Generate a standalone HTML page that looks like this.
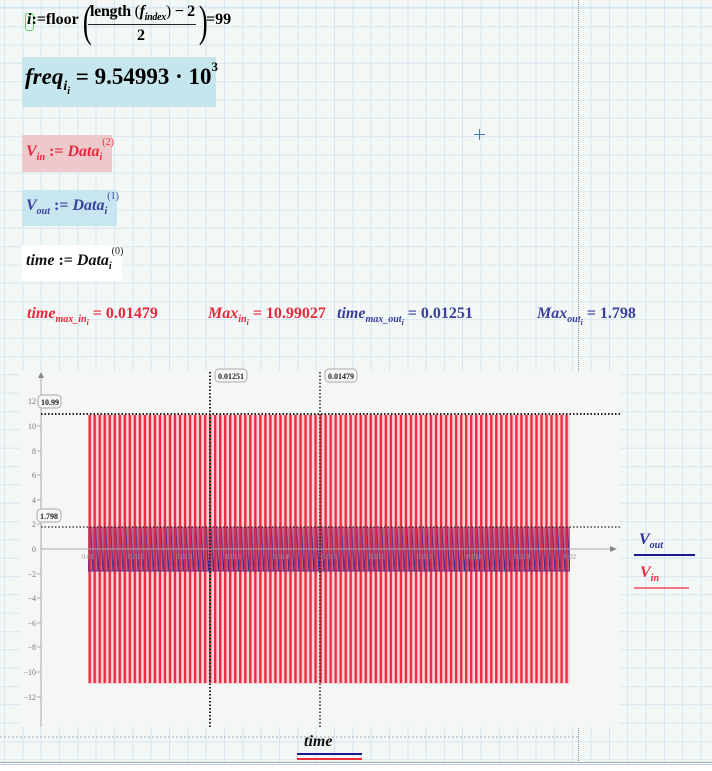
<!DOCTYPE html>
<html><head><meta charset="utf-8"><style>
html,body{margin:0;padding:0;}
body{width:712px;height:771px;position:relative;overflow:hidden;background-color:#f3f7f5;
background-image:repeating-linear-gradient(90deg,#d6e7f3 0 1px,transparent 1px 18.33px),repeating-linear-gradient(0deg,#d6e7f3 0 1px,transparent 1px 18.33px);
background-position:4px 7.7px;font-family:"Liberation Serif",serif;}
.a{position:absolute;white-space:nowrap;}
.m{font-weight:bold;font-size:16px;}
i{font-style:italic}
sub,sup{font-size:10px;line-height:0}
.red{color:#e8283c}.blue{color:#3b3f9e}
</style></head><body>
<div class="a" style="left:25px;top:13px;width:7px;height:16px;border:1.5px solid #5fd060;border-radius:3px;"></div>
<div class="a m" style="left:27px;top:11px;"><i>i</i>:=floor</div>
<div class="a" style="left:80px;top:-4px;font-size:44px;transform:scaleX(0.6);">(</div>
<div class="a m" style="left:90px;top:3px;letter-spacing:-0.3px">length <span style="font-weight:normal">(</span><i>f<sub>index</sub></i><span style="font-weight:normal">)</span> − 2</div>
<div class="a" style="left:88px;top:24px;width:108px;height:1px;background:#222"></div>
<div class="a m" style="left:137px;top:27px;">2</div>
<div class="a" style="left:196px;top:-4px;font-size:44px;transform:scaleX(0.6);">)</div>
<div class="a m" style="left:206px;top:11px;">=99</div>
<div class="a" style="left:22px;top:57px;width:194px;height:50px;background:#c6e6ee"></div>
<div class="a" style="left:25px;top:64px;font-size:23px;font-weight:bold;"><i>freq</i><sub style="font-size:14px;"><i>i</i><sub style="font-size:10px;"><i>i</i></sub></sub> = 9.54993 · 10<sup style="font-size:13px;position:relative;top:-4px;">3</sup></div>
<div class="a" style="left:22px;top:135px;width:90px;height:37px;background:#edc9cc"></div>
<div class="a m red" style="left:26px;top:143px;"><i>V<sub>in</sub></i> := <i>Data</i><sub><i>i</i></sub><sup style="position:relative;top:-5px;font-weight:normal">(2)</sup></div>
<div class="a" style="left:22px;top:190px;width:95px;height:36px;background:#c7e6ef"></div>
<div class="a m blue" style="left:26px;top:197px;"><i>V<sub>out</sub></i> := <i>Data</i><sub><i>i</i></sub><sup style="position:relative;top:-5px;font-weight:normal">(1)</sup></div>
<div class="a" style="left:22px;top:245px;width:100px;height:36px;background:#fff"></div>
<div class="a m" style="left:26px;top:252px;color:#111"><i>time</i> := <i>Data</i><sub><i>i</i></sub><sup style="position:relative;top:-5px;font-weight:normal">(0)</sup></div>
<div class="a m red" style="left:27px;top:305px;"><i>time<sub>max_in<sub style="font-size:8px">i</sub></sub></i> = 0.01479</div>
<div class="a m red" style="left:208px;top:305px;"><i>Max<sub>in<sub style="font-size:8px">i</sub></sub></i> = 10.99027</div>
<div class="a m blue" style="left:337px;top:305px;"><i>time<sub>max_out<sub style="font-size:8px">i</sub></sub></i> = 0.01251</div>
<div class="a m blue" style="left:537px;top:305px;"><i>Max<sub>out<sub style="font-size:8px">i</sub></sub></i> = 1.798</div>
<div class="a" style="left:474px;top:134px;width:11px;height:1px;background:#3a7bd5"></div>
<div class="a" style="left:479px;top:129px;width:1px;height:11px;background:#3a7bd5"></div>
<div class="a" style="left:578px;top:0;width:0;height:771px;border-left:1px dotted #999"></div>
<svg class="a" style="left:0;top:0" width="712" height="771">
<defs>
<pattern id="pr" x="88" y="0" width="5.02" height="771" patternUnits="userSpaceOnUse">
<rect x="0.5" y="415" width="2.4" height="268" fill="#ee2a3e"/>
</pattern>
<pattern id="pb" x="88" y="0" width="5.02" height="771" patternUnits="userSpaceOnUse">
<polyline points="0,571 2.51,527 5.02,571" fill="none" stroke="#2a2a9a" stroke-width="0.9"/>
</pattern>
</defs>
<rect x="20" y="371" width="600" height="356" fill="#f4f7f4"/>
<rect x="88" y="414" width="482" height="270" fill="#f6d6da"/>
<rect x="88" y="527" width="482" height="44" fill="#c04060" opacity="0.6"/>
<rect x="88" y="526" width="482" height="46" fill="url(#pb)"/>
<rect x="88" y="414" width="482" height="270" fill="url(#pr)"/>
<rect x="88" y="527" width="482" height="44" fill="#7a2a80" opacity="0.22"/>
<line x1="88" y1="549" x2="570" y2="549" stroke="#c83048" stroke-width="1.5"/>
<line x1="88" y1="571" x2="570" y2="571" stroke="#6a2a80" stroke-width="1"/>
<line x1="41" y1="375" x2="41" y2="727" stroke="#aaa" stroke-width="1"/>
<polygon points="38,378 44,378 41,372" fill="#888"/>
<line x1="41" y1="549" x2="612" y2="549" stroke="#aaa" stroke-width="1"/>
<polygon points="610,546 610,552 617,549" fill="#888"/>
<g stroke="#aaa"><line x1="37" y1="401.5" x2="41" y2="401.5"/><line x1="37" y1="426" x2="41" y2="426"/><line x1="37" y1="451" x2="41" y2="451"/><line x1="37" y1="475" x2="41" y2="475"/><line x1="37" y1="500" x2="41" y2="500"/><line x1="37" y1="524" x2="41" y2="524"/><line x1="37" y1="574" x2="41" y2="574"/><line x1="37" y1="598" x2="41" y2="598"/><line x1="37" y1="623" x2="41" y2="623"/><line x1="37" y1="647" x2="41" y2="647"/><line x1="37" y1="672" x2="41" y2="672"/><line x1="37" y1="697" x2="41" y2="697"/></g>
<g font-family="Liberation Serif,serif" font-size="8" fill="#777" text-anchor="end">
<text x="36" y="404">12</text><text x="36" y="429">10</text><text x="36" y="454">8</text><text x="36" y="478">6</text><text x="36" y="503">4</text><text x="36" y="527">2</text><text x="36" y="552">0</text><text x="36" y="577">−2</text><text x="36" y="601">−4</text><text x="36" y="626">−6</text><text x="36" y="650">−8</text><text x="36" y="675">−10</text><text x="36" y="700">−12</text>
</g>
<g font-family="Liberation Serif,serif" font-size="7" fill="#999" text-anchor="middle">
<text x="88" y="559">0.01</text><text x="136" y="559">0.011</text><text x="184" y="559">0.012</text><text x="233" y="559">0.013</text><text x="281" y="559">0.014</text><text x="329" y="559">0.015</text><text x="377" y="559">0.016</text><text x="425" y="559">0.017</text><text x="474" y="559">0.018</text><text x="522" y="559">0.019</text><text x="570" y="559">0.02</text>
</g>
<line x1="41" y1="414" x2="620" y2="414" stroke="#222" stroke-width="2" stroke-dasharray="1.5,2"/>
<line x1="41" y1="527" x2="620" y2="527" stroke="#222" stroke-width="1.2" stroke-dasharray="1.5,2"/>
<line x1="210" y1="372" x2="210" y2="727" stroke="#222" stroke-width="2" stroke-dasharray="1.5,2"/>
<line x1="320" y1="372" x2="320" y2="727" stroke="#222" stroke-width="1.5" stroke-dasharray="1.5,2"/>
<g font-family="Liberation Serif,serif" font-size="8" font-weight="bold" fill="#222">
<rect x="215" y="369" width="32" height="13" rx="4" fill="#f7f7f7" stroke="#aaa"/><text x="218" y="379">0.01251</text>
<rect x="325" y="369" width="32" height="13" rx="4" fill="#f7f7f7" stroke="#aaa"/><text x="328" y="379">0.01479</text>
<rect x="38" y="395" width="23" height="13" rx="4" fill="#f7f7f7" stroke="#aaa"/><text x="41" y="405">10.99</text>
<rect x="37" y="509" width="24" height="13" rx="4" fill="#f7f7f7" stroke="#aaa"/><text x="40" y="519">1.798</text>
</g>
<line x1="634" y1="555" x2="695" y2="555" stroke="#1a1a8c" stroke-width="2"/>
<line x1="634" y1="588" x2="689" y2="588" stroke="#ee2a3e" stroke-width="1.2"/>
<line x1="0" y1="737" x2="580" y2="737" stroke="#aab" stroke-width="1" stroke-dasharray="2,2"/>
<line x1="297" y1="754" x2="362" y2="754" stroke="#1a1a8c" stroke-width="2"/>
<line x1="297" y1="759" x2="362" y2="759" stroke="#ee2a3e" stroke-width="2"/>
<rect x="0" y="762" width="712" height="9" fill="#fff"/>
<line x1="0" y1="762.5" x2="712" y2="762.5" stroke="#9ab" stroke-width="1"/>
<line x1="0" y1="764.5" x2="712" y2="764.5" stroke="#bcd" stroke-width="1"/>
</svg>
<div class="a" style="left:639px;top:531px;font-size:16px;color:#2b2f9a;font-weight:bold"><i>V<sub>out</sub></i></div>
<div class="a" style="left:640px;top:564px;font-size:16px;color:#ee2a3e;font-weight:bold"><i>V<sub>in</sub></i></div>
<div class="a" style="left:304px;top:733px;font-size:16px;color:#111;font-weight:bold"><i>time</i></div>
</body></html>
